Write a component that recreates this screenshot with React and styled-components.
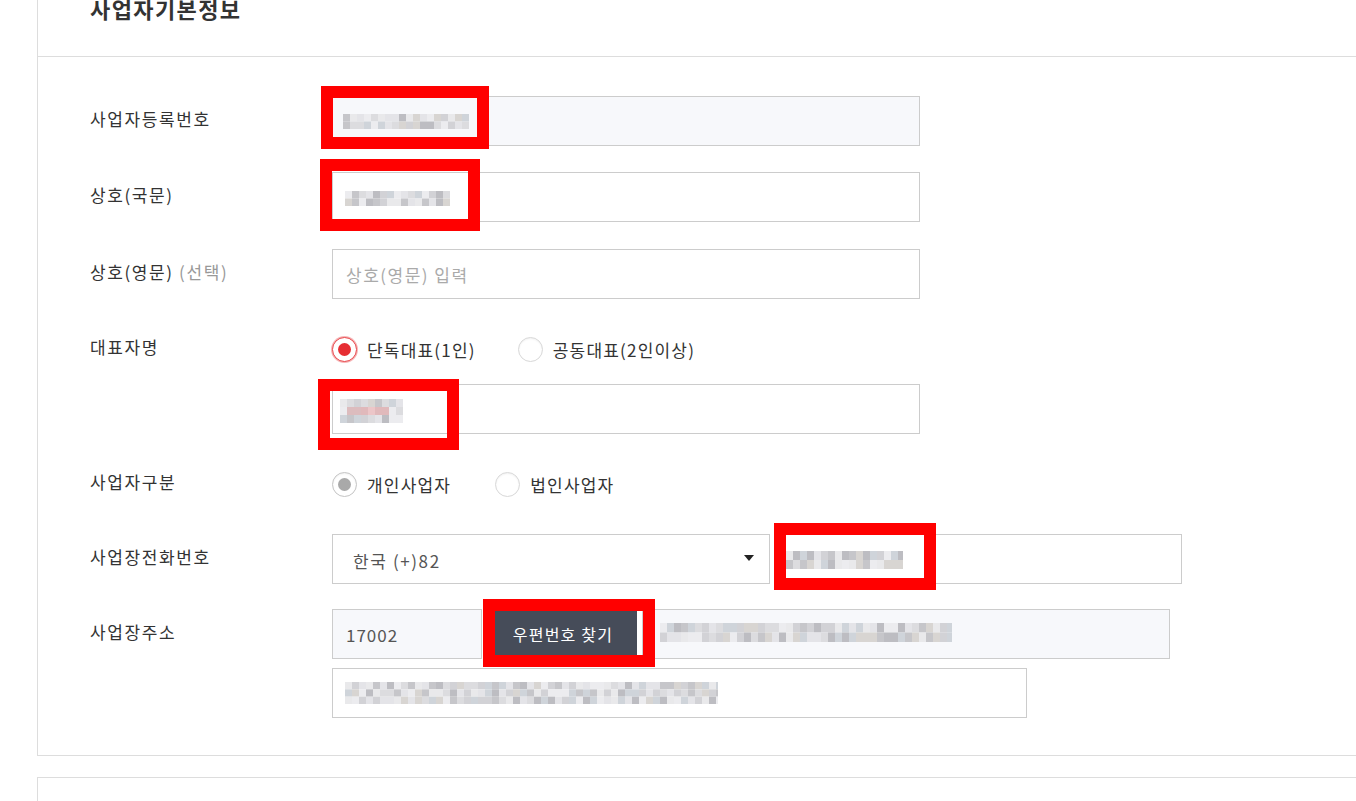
import React from "react";
import styled, { createGlobalStyle } from "styled-components";

const Global = createGlobalStyle`
  html, body { margin: 0; padding: 0; background: #fff; overflow: hidden; }
  body { font-family: "Noto Sans CJK KR", "Noto Sans", sans-serif; color: #333; }
  * { box-sizing: border-box; }
`;

const Page = styled.div`
  width: 1356px;
  height: 801px;
  overflow: hidden;
`;

const Card = styled.section`
  margin: ${(p) => p.$mt}px 0 0 37px;
  width: 1400px;
  border: 1px solid #ddd;
  background: #fff;
  min-height: ${(p) => p.$minH || 0}px;
`;

const Header = styled.div`
  padding: 30px 0 31px 52px;
  border-bottom: 1px solid #ddd;
`;

const Title = styled.h2`
  margin: 0;
  font-size: 22px;
  line-height: 33px;
  font-weight: 700;
  letter-spacing: 1.4px;
  color: #333;
`;

const Body = styled.div`
  padding: 39px 0 37px 52px;
  display: flex;
  flex-direction: column;
`;

const Row = styled.div`
  display: grid;
  grid-template-columns: 242px auto;
  margin-top: ${(p) => p.$mt || 0}px;
`;

const Label = styled.div`
  font-size: 17px;
  line-height: 45px;
  letter-spacing: 1.6px;
  color: #333;
  white-space: nowrap;
`;

const Optional = styled.span`
  color: #999;
`;

const Fields = styled.div`
  display: flex;
  flex-direction: column;
  gap: ${(p) => p.$gap || 0}px;
`;

const Inline = styled.div`
  display: flex;
  gap: ${(p) => p.$gap || 0}px;
`;

const Field = styled.div`
  position: relative;
  width: ${(p) => p.$w}px;
  height: 50px;
  flex: none;
`;

const Input = styled.input`
  width: 100%;
  height: 100%;
  border: 1px solid #ccc;
  border-radius: 0;
  background: ${(p) => (p.readOnly ? "#f7f8fb" : "#fff")};
  padding: 0 13px;
  font-family: inherit;
  font-size: 17px;
  letter-spacing: ${(p) => (p.$tight ? 1 : 1.5)}px;
  color: #555;
  outline: none;
  &::placeholder { color: #aaa; }
`;

const SelectBox = styled.div`
  width: ${(p) => p.$w}px;
  height: 50px;
  border: 1px solid #ccc;
  background: #fff;
  display: flex;
  align-items: center;
  justify-content: space-between;
  padding: 2px 15px 0 20px;
  font-size: 17px;
  letter-spacing: 1.6px;
  color: #555;
  flex: none;
`;

const Caret = styled.svg`
  width: 10px;
  height: 6px;
  display: block;
  margin-top: -4px;
`;

const DarkButton = styled.button`
  position: relative;
  width: 150px;
  height: 50px;
  flex: none;
  border: 0;
  background: #464c59;
  color: #fff;
  font-family: inherit;
  font-size: 16px;
  letter-spacing: 1.2px;
  padding: 0 0 0 2px;
  cursor: pointer;
`;

const RadioGroup = styled.div`
  height: 50px;
  display: flex;
  align-items: center;
  gap: ${(p) => p.$gap}px;
`;

const RadioOption = styled.label`
  display: flex;
  align-items: center;
  gap: 10px;
  font-size: 17px;
  letter-spacing: 1.2px;
  color: #333;
  cursor: pointer;
`;

const RadioCircle = styled.span`
  width: 25px;
  height: 25px;
  border-radius: 50%;
  flex: none;
  display: flex;
  align-items: center;
  justify-content: center;
  background: #fff;
  border: 1px solid ${(p) => (p.$tone === "red" ? "#e8464a" : p.$tone === "gray" ? "#c4c4c4" : "#d8d8d8")};
  box-shadow: ${(p) =>
    p.$tone === "red"
      ? "0 0 0 1px rgba(232,70,74,0.4)"
      : "inset 0 1px 2px rgba(0,0,0,0.06)"};
  &::after {
    content: "";
    display: ${(p) => (p.$tone === "none" ? "none" : "block")};
    width: 13px;
    height: 13px;
    border-radius: 50%;
    background: ${(p) => (p.$tone === "red" ? "#e62e33" : "#a9a9a9")};
  }
`;

const RedMark = styled.div`
  position: absolute;
  left: ${(p) => p.$l}px;
  top: ${(p) => p.$t}px;
  width: ${(p) => p.$w}px;
  height: ${(p) => p.$h}px;
  border: 12px solid #ff0000;
  pointer-events: none;
  z-index: 3;
`;

const MosaicSvg = styled.svg`
  position: absolute;
  left: ${(p) => p.$l}px;
  top: ${(p) => p.$t}px;
  display: block;
  z-index: 2;
`;

const GRAY = ["#d2d2d6", "#c6c6ca", "#dcdcdf", "#e4e4e8", "#bdbdc2", "#ececef", "#d8d5d2", "#cfd4da", "#e9e9eb"];
const PINK = ["#f6d8da", "#ecc6c8", "#e0b9bb", "#f3e0e1", "#dcbcbe"];

function Mosaic({ l, t, w, h, rows, seed = 1, pinkRow = -1 }) {
  const cell = 7;
  const cols = Math.ceil(w / cell);
  const ch = h / rows;
  let s = seed * 9301 + 49297;
  const rnd = () => {
    s = (s * 9301 + 49297) % 233280;
    return s / 233280;
  };
  const rects = [];
  for (let r = 0; r < rows; r++) {
    for (let c = 0; c < cols; c++) {
      const pal = r === pinkRow && c > 0 && c < cols - 2 ? PINK : GRAY;
      const fill = pal[Math.floor(rnd() * pal.length)];
      rects.push(
        <rect key={`${r}-${c}`} x={c * cell} y={r * ch} width={cell} height={ch} fill={fill} />
      );
    }
  }
  return (
    <MosaicSvg $l={l} $t={t} width={w} height={h} viewBox={`0 0 ${w} ${h}`}>
      {rects}
    </MosaicSvg>
  );
}

function Radio({ tone, children }) {
  return (
    <RadioOption>
      <RadioCircle $tone={tone} />
      {children}
    </RadioOption>
  );
}

export default function App() {
  return (
    <>
      <Global />
      <Page>
        <Card $mt={-39}>
          <Header>
            <Title>사업자기본정보</Title>
          </Header>
          <Body>
            <Row>
              <Label>사업자등록번호</Label>
              <Field $w={588}>
                <Input readOnly defaultValue="" />
                <Mosaic l={11} t={18} w={126} h={15} rows={2} seed={3} />
                <RedMark $l={-11} $t={-10} $w={168} $h={63} />
              </Field>
            </Row>

            <Row $mt={26}>
              <Label>상호(국문)</Label>
              <Field $w={588}>
                <Input defaultValue="" />
                <Mosaic l={13} t={19} w={105} h={15} rows={2} seed={7} />
                <RedMark $l={-12} $t={-13} $w={160} $h={72} />
              </Field>
            </Row>

            <Row $mt={27}>
              <Label>
                상호(영문) <Optional>(선택)</Optional>
              </Label>
              <Field $w={588}>
                <Input placeholder="상호(영문) 입력" />
              </Field>
            </Row>

            <Row $mt={25}>
              <Label>대표자명</Label>
              <Fields $gap={10}>
                <RadioGroup $gap={42}>
                  <Radio tone="red">단독대표(1인)</Radio>
                  <Radio tone="none">공동대표(2인이상)</Radio>
                </RadioGroup>
                <Field $w={588}>
                  <Input defaultValue="" />
                  <Mosaic l={8} t={15} w={63} h={24} rows={3} seed={11} pinkRow={1} />
                  <RedMark $l={-14} $t={-5} $w={141} $h={71} />
                </Field>
              </Fields>
            </Row>

            <Row $mt={25}>
              <Label>사업자구분</Label>
              <RadioGroup $gap={44}>
                <Radio tone="gray">개인사업자</Radio>
                <Radio tone="none">법인사업자</Radio>
              </RadioGroup>
            </Row>

            <Row $mt={25}>
              <Label>사업장전화번호</Label>
              <Inline $gap={6}>
                <SelectBox $w={438}>
                  <span>한국 (+)82</span>
                  <Caret viewBox="0 0 10 6">
                    <path d="M0 0 L10 0 L5 6 Z" fill="#222" />
                  </Caret>
                </SelectBox>
                <Field $w={406}>
                  <Input defaultValue="" />
                  <Mosaic l={10} t={17} w={117} h={18} rows={2} seed={5} />
                  <RedMark $l={-2} $t={-11} $w={162} $h={67} />
                </Field>
              </Inline>
            </Row>

            <Row $mt={25}>
              <Label>사업장주소</Label>
              <Fields $gap={9}>
                <Inline $gap={5}>
                  <Field $w={150}>
                    <Input readOnly $tight defaultValue="17002" />
                  </Field>
                  <DarkButton type="button">
                    우편번호 찾기
                    <RedMark $l={-4} $t={-10} $w={172} $h={68} />
                  </DarkButton>
                  <Field $w={528}>
                    <Input readOnly defaultValue="" />
                    <Mosaic l={18} t={14} w={292} h={19} rows={2} seed={13} />
                  </Field>
                </Inline>
                <Field $w={695}>
                  <Input defaultValue="" />
                  <Mosaic l={13} t={14} w={373} h={22} rows={3} seed={17} />
                </Field>
              </Fields>
            </Row>
          </Body>
        </Card>
        <Card $mt={21} $minH={120} />
      </Page>
    </>
  );
}
